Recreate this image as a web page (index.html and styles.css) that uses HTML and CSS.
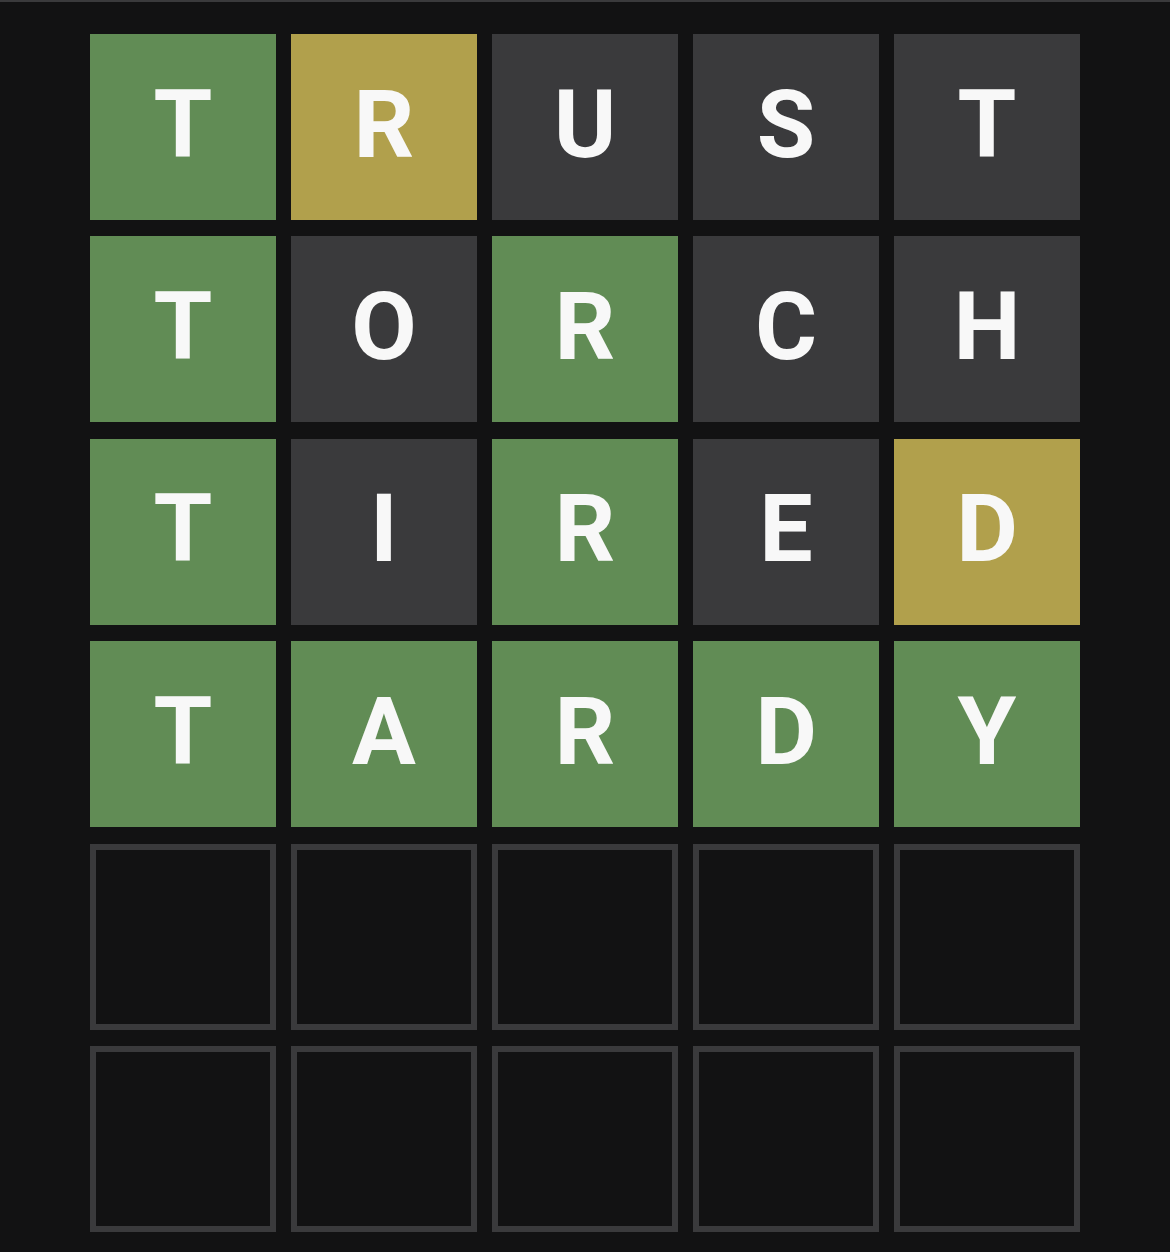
FILE: index.html
```html
<!DOCTYPE html>
<html>
<head>
<meta charset="utf-8">
<link rel="stylesheet" href="styles.css">
</head>
<body>
<div class="page">
  <div class="board">
    <div class="tile correct">T</div>
    <div class="tile present">R</div>
    <div class="tile absent">U</div>
    <div class="tile absent">S</div>
    <div class="tile absent">T</div>

    <div class="tile correct">T</div>
    <div class="tile absent">O</div>
    <div class="tile correct">R</div>
    <div class="tile absent">C</div>
    <div class="tile absent">H</div>

    <div class="tile correct">T</div>
    <div class="tile absent">I</div>
    <div class="tile correct">R</div>
    <div class="tile absent">E</div>
    <div class="tile present">D</div>

    <div class="tile correct">T</div>
    <div class="tile correct">A</div>
    <div class="tile correct">R</div>
    <div class="tile correct">D</div>
    <div class="tile correct">Y</div>

    <div class="tile empty"></div>
    <div class="tile empty"></div>
    <div class="tile empty"></div>
    <div class="tile empty"></div>
    <div class="tile empty"></div>

    <div class="tile empty"></div>
    <div class="tile empty"></div>
    <div class="tile empty"></div>
    <div class="tile empty"></div>
    <div class="tile empty"></div>
  </div>
</div>
</body>
</html>
```

FILE: styles.css
```css
html, body {
  margin: 0;
  padding: 0;
  background: #121213;
}
.page {
  width: 1170px;
  height: 1252px;
  box-sizing: border-box;
  border-top: 2px solid #3a3a3c;
  padding: 32px 0 0 90px;
  background: #121213;
  overflow: hidden;
}
.board {
  display: grid;
  grid-template-columns: repeat(5, 186px);
  grid-auto-rows: 186px;
  column-gap: 15px;
  row-gap: 16.4px;
}
.tile {
  box-sizing: border-box;
  display: flex;
  align-items: center;
  justify-content: center;
  font-family: Roboto, "Liberation Sans", Arial, sans-serif;
  font-weight: 700;
  font-size: 95px;
  line-height: 1;
  color: #f8f8f8;
  padding-bottom: 6px;
}
.correct { background: #618c55; }
.present { background: #b1a04c; }
.absent { background: #3a3a3c; }
.empty {
  background: #121213;
  border: 6px solid #3a3a3c;
}
```
